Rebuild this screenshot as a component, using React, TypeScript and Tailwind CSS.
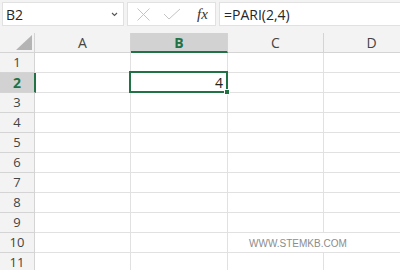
import React from "react";

const cols = ["A", "B", "C", "D"];
const rows = [1, 2, 3, 4, 5, 6, 7, 8, 9, 10, 11];

const App: React.FC = () => {
  return (
    <div
      className="w-[400px] h-[270px] overflow-hidden bg-white"
      style={{ fontFamily: '"Open Sans", "Noto Sans", sans-serif' }}
    >
      {/* formula bar */}
      <div className="h-[33px] bg-[#f3f3f3] flex items-start pt-[2px] pl-[2px] gap-[3px]">
        <div className="w-[122px] h-[24px] bg-white border border-[#e1e1e1] flex items-center justify-between pl-[3px] pr-[5px]">
          <span className="text-[14px] text-[#262626]">B2</span>
          <svg width="7" height="5" viewBox="0 0 7 5" className="text-[#555]">
            <path d="M1 1 L3.5 3.5 L6 1" fill="none" stroke="currentColor" strokeWidth="1.1" />
          </svg>
        </div>
        <div className="w-[89px] h-[24px] bg-white border border-[#e1e1e1] flex items-center pl-[9px]">
          <svg width="13" height="13" viewBox="0 0 13 13">
            <path d="M0.5 0.5 L12.5 12.5 M12.5 0.5 L0.5 12.5" stroke="#c4c4c4" strokeWidth="1" fill="none" />
          </svg>
          <svg width="18" height="12" viewBox="0 0 18 12" className="ml-[13px]">
            <path d="M1 6 L6 11 L17 1" stroke="#c4c4c4" strokeWidth="1" fill="none" />
          </svg>
          <span
            className="text-[15px] italic text-[#333] ml-[16px]"
            style={{ fontFamily: '"Liberation Serif", serif' }}
          >
            fx
          </span>
        </div>
        <div className="flex-1 h-[24px] bg-white border border-[#e1e1e1] border-r-0 flex items-center pl-[4px]">
          <span className="text-[14px] text-[#262626]">=PARI(2,4)</span>
        </div>
      </div>

      {/* grid */}
      <div className="grid grid-cols-[35px_96px_97px_96px_96px] w-[420px] text-[#444]">
        <div className="h-[20px] bg-[#f3f3f3] border-r border-b border-[#d4d4d4] relative">
          <svg width="16" height="15" viewBox="0 0 16 15" className="absolute right-[2px] bottom-[2px]">
            <path d="M16 0 L16 15 L0 15 Z" fill="#b4b4b4" />
          </svg>
        </div>
        {cols.map((c) => (
          <div
            key={c}
            className={
              c === "B"
                ? "h-[20px] bg-[#d2d2d2] border-b-2 border-[#217346] border-r border-r-[#d4d4d4] flex items-center justify-center text-[14px] font-bold text-[#217346]"
                : "h-[20px] bg-[#f3f3f3] border-r border-b border-[#d4d4d4] flex items-center justify-center text-[14px]"
            }
          >
            {c}
          </div>
        ))}

        {rows.map((r) => (
          <React.Fragment key={r}>
            <div
              className={
                r === 2
                  ? "h-[20px] bg-[#d2d2d2] border-r-2 border-r-[#217346] border-b border-b-[#d4d4d4] -mr-[1px] relative z-10 flex items-center justify-center text-[14px] font-bold text-[#217346]"
                  : "h-[20px] bg-[#f3f3f3] border-r border-b border-[#d4d4d4] flex items-center justify-center text-[13px]"
              }
            >
              {r}
            </div>
            <div className="h-[20px] border-r border-b border-[#e1e1e1]" />
            <div className="h-[20px] border-r border-b border-[#e1e1e1] relative">
              {r === 2 && (
                <>
                  <div className="absolute -left-[2px] -top-[2px] -right-[1px] -bottom-[1px] border-2 border-[#217346] z-10" />
                  <span className="absolute right-[4px] top-0 h-full flex items-center text-[14px] text-[#222]">
                    4
                  </span>
                  <div className="absolute -right-[3px] -bottom-[3px] w-[6px] h-[6px] bg-[#217346] border border-white z-20" />
                </>
              )}
            </div>
            {r === 10 ? (
              <div className="h-[20px] border-b border-[#e1e1e1] relative">
                <span
                  className="absolute left-[21px] top-[1px] h-full flex items-center text-[10px] text-[#8c8c8c] whitespace-nowrap z-10"
                  style={{ fontFamily: '"Liberation Sans", sans-serif' }}
                >
                  WWW.STEMKB.COM
                </span>
              </div>
            ) : (
              <div className="h-[20px] border-r border-b border-[#e1e1e1]" />
            )}
            <div className="h-[20px] border-b border-[#e1e1e1]" />
          </React.Fragment>
        ))}
      </div>
    </div>
  );
};

export default App;
